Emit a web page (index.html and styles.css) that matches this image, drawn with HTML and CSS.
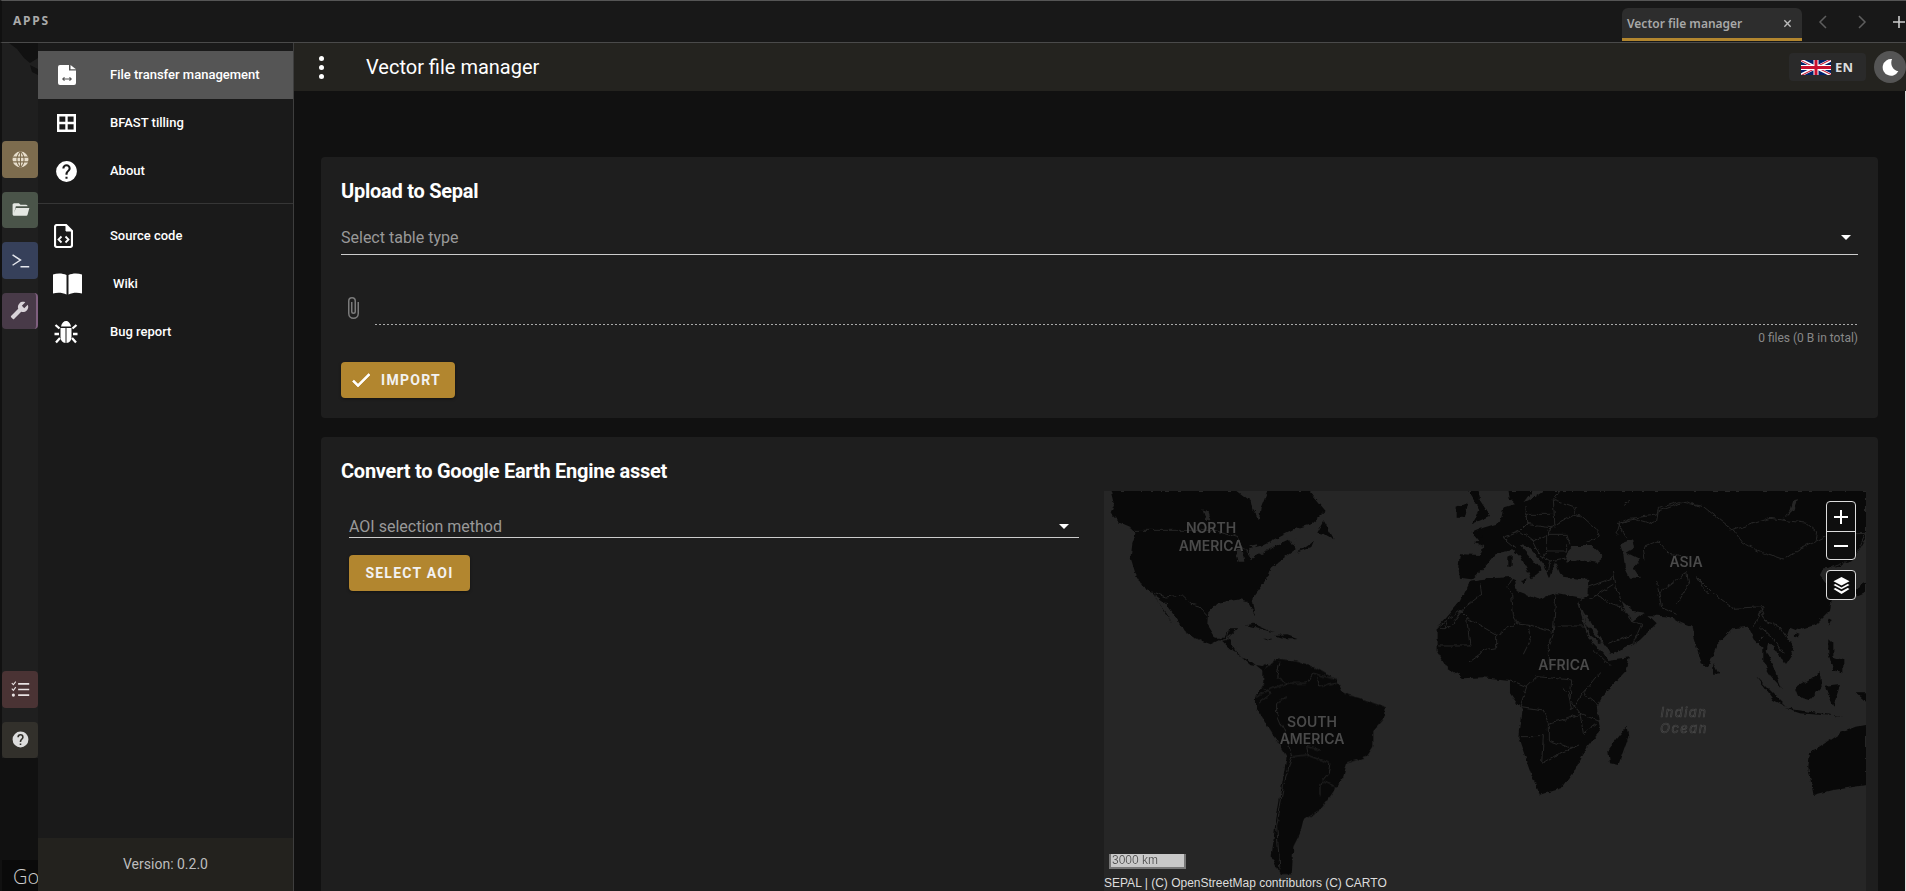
FILE: index.html
```html
<!DOCTYPE html>
<html lang="en">
<head>
    <meta charset="UTF-8">
    <meta name="viewport" content="width=device-width, initial-scale=1.0">
    <title>Vector file manager</title>
    <link rel="stylesheet" href="styles.css">
</head>
<body>
    <header class="topbar">
        <span class="apps-title">APPS</span>
        <div class="tab">
            <span class="tab-name">Vector file manager</span>
            <svg class="tab-close" viewBox="0 0 10 10"><path d="M1.5 1.5l7 7M8.5 1.5l-7 7"/></svg>
        </div>
        <svg class="tab-chevron" viewBox="0 0 12 16"><path d="M9 2L3 8l6 6"/></svg>
        <svg class="tab-chevron tab-chevron-next" viewBox="0 0 12 16"><path d="M3 2l6 6-6 6"/></svg>
        <svg class="tab-add" viewBox="0 0 12 12"><path d="M6 0v12M0 6h12"/></svg>
    </header>

    <div class="main">
        <aside class="rail">
            <svg class="rail-land" viewBox="0 0 38 60"><path d="M9 0l8 6 7 9 6 5 8-5V0zM30 22l8 4v6l-6-3z"/></svg>
            <div class="rail-group">
                <div class="rail-btn rail-globe">
                    <svg viewBox="0 0 24 24"><circle cx="12" cy="12" r="10" fill="#e6ddcb"/><path d="M12 2c-6 5-6 15 0 20M12 2c6 5 6 15 0 20M2 9h20M2 15h20M12 2v20" fill="none" stroke="#7d6c4e" stroke-width="1.3"/></svg>
                </div>
                <div class="rail-btn rail-folder">
                    <svg viewBox="0 0 24 24"><path d="M19 20H4c-1.100 0-2-.9-2-2V6c0-1.100.9-2 2-2h6l2 2h7a2 2 0 0 1 2 2H6.100L4 16l2.100-6h17.100l-2.300 8.500c-.2.9-1 1.500-1.900 1.500z" fill="#e4e7e2"/></svg>
                </div>
                <div class="rail-btn rail-terminal">
                    <svg viewBox="0 0 24 24"><path d="M2 5l10 6.500L2 18M12 20h11" fill="none" stroke="#e6e8ee" stroke-width="1.800"/></svg>
                </div>
                <div class="rail-btn rail-tools">
                    <svg viewBox="0 0 24 24"><g transform="matrix(-1 0 0 1 24 0)"><path d="M22.700 19l-9.100-9.100c.9-2.300.4-5-1.500-6.900-2-2-5-2.400-7.400-1.300L9 6 6 9 1.600 4.700C.4 7.100.9 10.100 2.900 12.100c1.900 1.900 4.600 2.400 6.900 1.500l9.100 9.100c.4.4 1 .4 1.400 0l2.300-2.300c.5-.4.5-1.100.1-1.400z" fill="#d9d3d9"/></g></svg>
                </div>
            </div>
            <div class="rail-group rail-group-bottom">
                <div class="rail-btn rail-tasks">
                    <svg viewBox="0 0 24 24"><path d="M1 4l2 2 3-4M1 11l2 2 3-4" fill="none" stroke="#e8e2e2" stroke-width="1.400"/><circle cx="3" cy="19" r="2" fill="#e8e2e2"/><path d="M9 5h14M9 12h14M9 19h14" stroke="#e8e2e2" stroke-width="2.200"/></svg>
                </div>
                <div class="rail-btn rail-help">
                    <svg viewBox="0 0 24 24"><path fill="#dcdcdc" d="M15.070 11.250l-.9.92C13.450 12.890 13 13.500 13 15h-2v-.5c0-1.110.45-2.110 1.170-2.830l1.240-1.260c.37-.36.59-.86.59-1.410 0-1.110-.9-2-2-2a2 2 0 0 0-2 2H8a4 4 0 0 1 4-4 4 4 0 0 1 4 4c0 .88-.36 1.670-.93 2.250M13 19h-2v-2h2M12 2A10 10 0 0 0 2 12a10 10 0 0 0 10 10 10 10 0 0 0 10-10c0-5.530-4.500-10-10-10z"/></svg>
                </div>
            </div>
            <div class="rail-google">Google</div>
        </aside>

        <nav class="drawer">
            <ul class="nav-list">
                <li class="nav-item nav-item-active">
                    <span class="nav-icon"><svg class="icon-file" viewBox="0 0 18 20"><path fill="#fff" d="M2 0h9v5.500h7V18a2 2 0 0 1-2 2H2a2 2 0 0 1-2-2V2a2 2 0 0 1 2-2z"/><path fill="#fff" d="M12.500 0L18 4.200h-5.500z"/><path d="M5 14h8M6.500 12.300L4.800 14l1.700 1.700M11.500 12.300l1.700 1.700-1.700 1.700" fill="none" stroke="#555" stroke-width="1.200"/></svg></span>
                    <span class="nav-text">File transfer management</span>
                </li>
                <li class="nav-item">
                    <span class="nav-icon"><svg class="icon-grid" viewBox="0 0 19 18"><path d="M1.200 1.200h16.600v15.600H1.200zM9.500 1v16M1 9h17" fill="none" stroke="#fff" stroke-width="2.400"/></svg></span>
                    <span class="nav-text">BFAST tilling</span>
                </li>
                <li class="nav-item">
                    <span class="nav-icon"><svg class="icon-help" viewBox="0 0 24 24"><path fill="#fff" d="M15.070 11.250l-.9.92C13.450 12.890 13 13.500 13 15h-2v-.5c0-1.110.45-2.110 1.170-2.830l1.240-1.260c.37-.36.59-.86.59-1.410 0-1.110-.9-2-2-2a2 2 0 0 0-2 2H8a4 4 0 0 1 4-4 4 4 0 0 1 4 4c0 .88-.36 1.670-.93 2.250M13 19h-2v-2h2M12 2A10 10 0 0 0 2 12a10 10 0 0 0 10 10 10 10 0 0 0 10-10c0-5.530-4.500-10-10-10z"/></svg></span>
                    <span class="nav-text">About</span>
                </li>
            </ul>
            <hr class="nav-divider">
            <ul class="nav-list nav-list-links">
                <li class="nav-item">
                    <span class="nav-icon"><svg class="icon-code" viewBox="0 0 19 24"><path d="M3 1h9l6 6v14a2 2 0 0 1-2 2H3a2 2 0 0 1-2-2V3a2 2 0 0 1 2-2z" fill="none" stroke="#fff" stroke-width="2.200"/><path d="M12 1v6h6" fill="#fff" stroke="#fff"/><path d="M7.500 12.500L4.500 15.500l3 3M11.500 12.500l3 3-3 3" fill="none" stroke="#fff" stroke-width="1.800"/></svg></span>
                    <span class="nav-text">Source code</span>
                </li>
                <li class="nav-item">
                    <span class="nav-icon"><svg class="icon-book" viewBox="0 0 29 22"><path fill="#fff" d="M0 1.500C4 0 9.500 0 13.500 2v19.500C9.500 19.500 4 19.500 0 20.500zM15.500 2c4-2 9.500-2 13.500-.5v19c-4-1-9.500-1-13.500 1z"/></svg></span>
                    <span class="nav-text nav-text-wiki">Wiki</span>
                </li>
                <li class="nav-item">
                    <span class="nav-icon"><svg class="icon-bug" viewBox="0 0 24 24"><path fill="#fff" d="M7 6.500C7.500 3 10 1 12 1s4.500 2 5 5.500zM6.500 8h5v15c-3-.3-5-2.300-5-6zM12.500 8h5v9c0 3.700-2 5.700-5 6z"/><path d="M5.500 8.500L1.500 5M18.500 8.500l4-3.500M5 14H.5M19 14h4.500M6 18l-4 4.500M18 18l4 4.500" fill="none" stroke="#fff" stroke-width="2.300"/></svg></span>
                    <span class="nav-text">Bug report</span>
                </li>
            </ul>
            <footer class="drawer-footer">Version: 0.2.0</footer>
        </nav>

        <div class="content">
            <div class="appbar">
                <div class="kebab"><i></i><i></i><i></i></div>
                <h1 class="app-title">Vector file manager</h1>
                <div class="lang-btn">
                    <svg class="flag" viewBox="0 0 60 30">
                        <clipPath id="flagClip"><path d="M30 15h30v15zM30 15v15H0zM30 15H0V0zM30 15V0h30z"/></clipPath>
                        <rect width="60" height="30" fill="#012169"/>
                        <path d="M0 0l60 30M60 0L0 30" stroke="#fff" stroke-width="6"/>
                        <path d="M0 0l60 30M60 0L0 30" clip-path="url(#flagClip)" stroke="#C8102E" stroke-width="4"/>
                        <path d="M30 0v30M0 15h60" stroke="#fff" stroke-width="10"/>
                        <path d="M30 0v30M0 15h60" stroke="#C8102E" stroke-width="6"/>
                    </svg>
                    <span class="lang-code">EN</span>
                </div>
                <div class="theme-btn">
                    <svg viewBox="0 0 24 24"><path fill="#fff" d="M14.500 2.500A10 10 0 1 0 22 17.200 10.500 10.500 0 0 1 14.500 2.500z"/></svg>
                </div>
            </div>

            <div class="page">
                <section class="card">
                    <h2 class="card-title">Upload to Sepal</h2>
                    <div class="select">
                        <span class="select-label">Select table type</span>
                        <span class="select-arrow"></span>
                    </div>
                    <div class="file-row">
                        <svg class="clip" viewBox="0 0 24 24"><path d="M16.500 6v11.500a4 4 0 0 1-4 4 4 4 0 0 1-4-4V5A2.500 2.500 0 0 1 11 2.500 2.500 2.500 0 0 1 13.500 5v10.500a1 1 0 0 1-1 1 1 1 0 0 1-1-1V6H10v9.500a2.500 2.500 0 0 0 2.500 2.500 2.500 2.500 0 0 0 2.500-2.500V5a4 4 0 0 0-4-4 4 4 0 0 0-4 4v12.500a5.500 5.500 0 0 0 5.500 5.500 5.500 5.500 0 0 0 5.500-5.500V6h-1.500z"/></svg>
                        <div class="file-input"></div>
                    </div>
                    <div class="file-count">0 files (0 B in total)</div>
                    <button class="btn btn-import">
                        <svg viewBox="0 0 24 24"><path fill="#fff" stroke="#fff" stroke-width=".7" d="M21 7L9 19l-5.500-5.500 1.410-1.410L9 16.170 19.590 5.590 21 7z"/></svg>
                        IMPORT
                    </button>
                </section>

                <section class="card card-map">
                    <h2 class="card-title">Convert to Google Earth Engine asset</h2>
                    <div class="columns">
                        <div class="aoi-col">
                            <div class="select select-aoi">
                                <span class="select-label">AOI selection method</span>
                                <span class="select-arrow"></span>
                            </div>
                            <button class="btn btn-aoi">SELECT AOI</button>
                        </div>
                        <div class="map">
                            <svg class="map-svg" viewBox="0 0 762 400">
                                <filter id="coast" x="-20" y="-20" width="802" height="440" filterUnits="userSpaceOnUse" color-interpolation-filters="sRGB">
                                    <feTurbulence type="fractalNoise" baseFrequency=".14" numOctaves="3" seed="4"/>
                                    <feDisplacementMap in="SourceGraphic" scale="5" xChannelSelector="R" yChannelSelector="G"/>
                                </filter>
                                <g filter="url(#coast)">
                                <!-- traced from crops, each group keeps its own crop coordinates -->
                                <g transform="scale(.3333)">
                                    <path class="land" d="M20 0L30 40 20 65 50 95 85 110 95 130 85 160 80 200 95 250 115 285 145 305 165 335 205 395 185 370 150 310 185 335 210 370 240 420 270 440 320 460 350 445 375 470 405 490 440 520 475 525 495 515 478 540 440 510 400 490 385 465 372 440 400 415 375 415 365 440 335 440 310 400 312 365 340 335 410 325 430 330 455 375 445 320 490 260 500 230 540 200 575 175 555 145 500 170 440 205 432 175 470 165 500 150 570 115 620 100 665 60 615 0H490L470 50 465 85 445 55 440 30 400 0z"/>
                                    <path class="land" d="M640 125L660 90 692 148 660 130zM578 185L630 148 622 168zM425 403L450 398 510 425 460 410zM510 432L550 430 582 442 540 442zM478 443L505 443 490 448z"/>
                                    <path class="water" d="M395 178L412 172 418 212 404 212zM295 55L310 60 320 90 305 85zM435 165L460 160 455 178z"/>
                                    <path class="border" d="M95 118H330L400 140 440 200 490 180 550 140 565 165 580 140M145 303L185 318 235 312 265 340 285 345 310 372M345 450L370 445 375 420M385 470L400 465 410 490M405 490L432 475"/>
                                </g>
                                <g transform="translate(-14 -11) scale(.3333)">
                                    <path class="land" d="M520 570L560 535 620 545 670 560 740 600 760 640 810 655 887 682 885 710 850 750 850 800 830 830 770 850 760 890 720 950 690 990 640 1020 630 1060 610 1100 605 1182H570L545 1130 555 1040 570 950 590 830 540 750 495 680 495 650 520 610z"/>
                                    <path class="border" d="M570 545L560 590 590 610 560 620 495 650M520 625L545 640 505 670M590 610L650 610 670 580 745 600M680 590L690 620 740 610M560 670L590 650M560 670L560 700 590 770 605 830M605 830L650 825 720 850 715 880 690 910 690 945M605 830L580 920 560 1040 570 1170M655 825L650 800 690 810M700 905L750 925"/>
                                </g>
                                <g transform="translate(296 0) scale(.3333)">
                                    <path class="land" d="M170 50L205 35 195 80 170 80zM240 20L235 0H205L238 55 225 85 215 100 270 75 235 20z"/>
                                </g>
                                <g transform="translate(396 -11) scale(.3333)">
                                    <path class="land" d="M-85 158L-50 143 0 128 10 83 45 73 30 58 25 33H1098V175L1060 240 1010 262 970 265 960 285 1000 335 990 390 945 435 895 450 870 440 860 470 885 510 855 555 830 510 805 490 800 510 835 600 845 625 815 590 790 550 790 500 770 490 745 440 700 445 650 495 625 560 605 550 580 470 575 440 545 430 510 410 445 405 470 430 420 480 330 522 320 500 270 465 235 365 262 350 265 300 190 290 180 280 165 245 150 295 130 250 85 200 60 195 125 270 95 295 60 230 40 210-10 220-25 235-55 273-85 298-120 293-125 263-120 223-60 225-50 200z"/>
                                    <path class="land" d="M-90 303L-60 298 30 291 45 298 50 333 115 358 165 338 245 353 232 370 265 475 310 520 325 540 390 532 380 570 305 650 290 680 300 750 260 800 225 870 185 925 120 945 95 885 55 770 65 690 30 640 30 600-50 592-110 595-160 560-190 510-190 443-120 363z"/>
                                    <path class="land" d="M380 740L385 770 355 855 330 850 325 810zM640 550L655 580 640 582zM768 588L860 680 820 660zM855 685L1030 710 900 700zM885 625L960 580 965 620 930 660 895 650zM975 620L1020 615 1000 680zM985 475L1000 490 1000 530 1030 540 1030 580 1000 570 985 520zM985 415L995 420 985 440zM1098 308L1060 330 1075 345 1098 335zM885 460L900 465 885 472zM1070 640L1098 640V665zM1098 735L1070 740 1020 760 930 820 925 860 940 945 1000 930 1098 915zM-75 190L-50 170-55 200zM25 230L35 225 35 260 25 260zM60 300L85 295 70 310z"/>
                                    <path class="water" d="M195 223L220 198 275 198 310 233 290 248 230 238 200 248zM360 193L400 178 405 203 380 218 420 238 400 263 420 293 390 293 375 263 370 223zM365 363L400 393 435 398 400 423 380 403zM235 373L270 423 320 503 325 528 300 483 260 433zM325 528L420 482 330 522zM100 33L130 33 90 60 70 70zM880 60L892 58 880 90 850 118 872 90z"/>
                                    <path class="border" d="M590 290L640 340 700 385 790 380 760 440M590 290L610 320 630 345M700 150L810 115 920 130 950 155 945 185 900 205 850 240 790 220 730 190 700 150M700 150L610 80 540 65 475 85 470 105 390 115 355 130 380 175M945 185L985 165 1098 160 1060 240M780 380L800 430 840 440 860 470M780 440L815 470 850 520M770 490L790 470M985 265L1040 245"/>
                                    <path class="border" d="M30 600L80 620 110 590 215 600 210 660 240 700 300 725M80 620L60 680 130 690 145 730 205 715 240 700M60 770H130L125 850 160 830 240 795M145 730L145 780 215 805M240 700L250 760 290 730M205 640L215 690 250 640 300 680M300 580L250 640M280 510L330 560M190 620L205 640"/>
                                </g>
                                <g transform="translate(296 0) scale(.3333)">
                                    <path class="border" d="M310 140L360 120 380 100 378 45M378 70L460 70M460 25L465 110M380 100L450 110M310 140L345 170M360 120L400 150 440 130M450 110L520 70 545 75 590 115 598 135 560 155M450 110L445 130 500 130 510 160M440 130L440 180 500 180 500 160M400 150L420 190 450 210 440 250M480 0L460 25 530 50 520 70M440 180L430 200M450 210L500 200"/>
                                    <path class="border" d="M650 130L660 95 700 85 750 100 770 90 775 60 860 30 900 50M670 45L690 30M730 170L775 150 810 190 860 200M735 205L730 170M640 240L650 300 665 330M770 270L785 350 830 370M770 310L860 245 868 280 830 340M580 310L640 340 665 345 690 385 725 400 700 455M625 460L700 430M560 290L640 260M570 325L640 280"/>
                                    <path class="border" d="M240 280L245 310 180 360 110 410M180 360L200 380 290 432 350 395 340 370 335 310 320 290 335 260M350 395L385 400 460 425 468 305M470 405H570M460 430L445 470 445 520M385 400L390 450 370 490M290 432L290 470 260 475 210 510M200 380L210 465 115 465M150 370L135 410M120 410H150L185 360"/>
                                </g>
                                </g>
                                <text class="map-label" x="107" y="42">NORTH</text>
                                <text class="map-label" x="107" y="60">AMERICA</text>
                                <text class="map-label" x="208" y="236">SOUTH</text>
                                <text class="map-label" x="208" y="253">AMERICA</text>
                                <text class="map-label" x="460" y="179">AFRICA</text>
                                <text class="map-label" x="582" y="76">ASIA</text>
                                <text class="map-ocean" x="580" y="226">Indian</text>
                                <text class="map-ocean" x="580" y="242">Ocean</text>
                            </svg>

                            <div class="map-zoom">
                                <div class="map-ctl">
                                    <svg viewBox="0 0 14 14"><path d="M7 0v14M0 7h14"/></svg>
                                </div>
                                <div class="map-ctl map-ctl-minus">
                                    <svg viewBox="0 0 14 14"><path d="M0 7h14"/></svg>
                                </div>
                            </div>
                            <div class="map-layers">
                                <svg viewBox="0 0 18 18"><path d="M9 0l8.500 4.500L9 9 .5 4.500zM2.500 7.500L9 11l6.500-3.500 2 1.100L9 13 .5 8.600zM2.500 11.600L9 15l6.500-3.400 2 1.100L9 18 .5 12.700z" fill="#fff"/></svg>
                            </div>
                            <div class="map-scale">3000 km</div>
                            <div class="map-attribution">SEPAL | (C) OpenStreetMap contributors (C) CARTO</div>
                        </div>
                    </div>
                </section>
            </div>
        </div>
    </div>
</body>
</html>
```

FILE: styles.css
```css
* {
    box-sizing: border-box;
}

html,
body {
    margin: 0;
    padding: 0;
    height: 891px;
    overflow: hidden;
}

body {
    font-family: Roboto, 'Noto Sans', sans-serif;
    background-color: #111;
    color: #fff;
}

h1,
h2,
ul {
    margin: 0;
    padding: 0;
}

svg {
    display: block;
}

/* top bar */
.topbar {
    display: flex;
    align-items: flex-start;
    height: 43px;
    background-color: #181818;
    border-top: 1px solid #555;
    border-bottom: 1px solid #4a4a4a;
    border-left: 2px solid #101010;
}

.apps-title {
    margin: 13px auto 0 11px;
    font-family: 'Noto Sans', sans-serif;
    font-size: 12px;
    font-weight: 700;
    letter-spacing: 1.8px;
    line-height: 14px;
    color: #aaa;
}

.tab {
    display: flex;
    align-items: center;
    justify-content: space-between;
    width: 180px;
    height: 33px;
    margin-top: 7px;
    padding: 0 10px 0 5px;
    background-color: #2d2d2d;
    border-bottom: 3px solid #b2862f;
    border-radius: 6px 6px 0 0;
}

.tab-name {
    font-family: 'Noto Sans', sans-serif;
    font-size: 12px;
    font-weight: 600;
    color: #a8a8a8;
}

.tab-close {
    width: 9px;
    height: 9px;
    fill: none;
    stroke: #bbb;
    stroke-width: 1.5;
}

.tab-chevron {
    width: 12px;
    height: 16px;
    margin: 13px 0 0 15px;
    fill: none;
    stroke: #5e5e5e;
    stroke-width: 1.5;
}

.tab-chevron-next {
    margin-left: 27px;
}

.tab-add {
    width: 12px;
    height: 12px;
    margin: 15px 1px 0 25px;
    fill: none;
    stroke: #ccc;
    stroke-width: 1.6;
}

/* main area */
.main {
    display: flex;
    height: 848px;
}

.rail {
    position: relative;
    display: flex;
    flex-direction: column;
    width: 38px;
    flex-shrink: 0;
    padding: 98px 0 133px;
    overflow: hidden;
    background-color: #1f1f1f;
    background-image: linear-gradient(#1f1f1f 0 715px, #111 715px 817px, #0a0a0a 817px);
    border-left: 2px solid #111;
}

.rail-land {
    position: absolute;
    top: 0;
    left: -2px;
    width: 38px;
    height: 60px;
    fill: #111;
}

.rail-group {
    display: flex;
    flex-direction: column;
    gap: 14px;
}

.rail-group-bottom {
    margin-top: auto;
}

.rail-btn {
    display: flex;
    align-items: center;
    justify-content: center;
    height: 36.5px;
    border-radius: 4px;
}

.rail-btn svg {
    width: 19px;
    height: 19px;
}

.rail-globe { background-color: #7d6c4e; }
.rail-folder { background-color: #4a5449; }
.rail-terminal { background-color: #36405a; }
.rail-tools { background-color: #483a48; border-right: 2px solid #7f5f7f; }
.rail-tasks { background-color: #4a3334; }
.rail-help { background-color: #32302b; }

.rail-google {
    position: absolute;
    left: 11px;
    bottom: 1px;
    font-family: 'Open Sans', sans-serif;
    font-size: 20px;
    font-weight: 300;
    color: #ccc;
}

/* navigation drawer */
.drawer {
    display: flex;
    flex-direction: column;
    width: 256px;
    flex-shrink: 0;
    padding-top: 8px;
    background-color: #1a1a1a;
    border-right: 1px solid #3e3e3e;
}

.nav-list {
    list-style: none;
}

.nav-list-links {
    flex: 1;
}

.nav-item {
    display: flex;
    align-items: center;
    height: 48px;
    padding-left: 16px;
}

.nav-item-active {
    background-color: #555;
}

.nav-icon {
    display: flex;
    align-items: center;
    justify-content: center;
    width: 24px;
    height: 24px;
    margin-right: 32px;
}

.nav-text {
    margin-bottom: 2px;
    font-size: 13px;
    font-weight: 500;
    color: #fff;
}

.nav-text-wiki {
    margin-left: 3px;
}

.icon-file { width: 18px; height: 20px; flex-shrink: 0; margin-left: 1px; }
.icon-grid { width: 19px; height: 18px; flex-shrink: 0; }
.icon-help { width: 25px; height: 25px; flex-shrink: 0; }
.icon-code { width: 19px; height: 24px; flex-shrink: 0; margin-left: -5px; }
.icon-book { width: 29px; height: 22px; flex-shrink: 0; margin-left: 3px; }
.icon-bug { width: 24px; height: 24px; flex-shrink: 0; }

.nav-divider {
    height: 1px;
    margin: 8px 0 8px;
    border: 0;
    background-color: #363636;
}

.drawer-footer {
    height: 53px;
    font-size: 14px;
    line-height: 53px;
    text-align: center;
    color: #bdbdbd;
    background-color: #23221e;
}

/* content */
.content {
    flex: 1;
    min-width: 0;
}

.appbar {
    display: flex;
    align-items: center;
    height: 48px;
    padding-left: 25px;
    background-color: #24231f;
}

.kebab {
    display: flex;
    flex-direction: column;
    gap: 4px;
    width: 6px;
}

.kebab i {
    display: block;
    width: 5px;
    height: 5px;
    border-radius: 50%;
    background-color: #fff;
}

.app-title {
    margin-left: 41px;
    font-size: 20px;
    font-weight: 400;
}

.lang-btn {
    display: flex;
    align-items: center;
    gap: 4px;
    width: 77px;
    height: 28px;
    margin-left: auto;
    padding-left: 12px;
    background-color: #2a2a2a;
    border-radius: 4px;
}

.flag {
    width: 30px;
    height: 15px;
}

.lang-code {
    font-family: 'Noto Sans', sans-serif;
    font-size: 13px;
    font-weight: 700;
    letter-spacing: .3px;
    color: #ddd;
}

.theme-btn {
    display: flex;
    align-items: center;
    justify-content: center;
    width: 32px;
    height: 32px;
    margin-left: 8px;
    border-radius: 50%;
    background-color: #555;
}

.theme-btn svg {
    width: 20px;
    height: 20px;
}

.page {
    height: 800px;
    padding: 66px 27px 0;
    overflow: hidden;
    border-right: 1px solid #ddd;
}

.card {
    padding: 18px 20px 20px;
    background-color: #1e1e1e;
    border-radius: 4px;
}

.card-map {
    margin-top: 19px;
    padding-right: 12px;
}

.card-title {
    font-size: 20px;
    font-weight: 700;
    line-height: 32px;
    letter-spacing: -.25px;
    color: #fff;
}

.select {
    display: flex;
    align-items: center;
    justify-content: space-between;
    height: 48px;
    padding: 19px 7px 5px 0;
    border-bottom: 1px solid #ccc;
}

.select-aoi {
    height: 47px;
    padding: 24px 10px 0 0;
}

.select-label {
    font-size: 16px;
    color: #999;
}

.select-arrow {
    width: 0;
    height: 0;
    border-left: 5px solid transparent;
    border-right: 5px solid transparent;
    border-top: 5px solid #fff;
}

.file-row {
    display: flex;
    gap: 10px;
    height: 29px;
    margin-top: 41px;
}

.clip {
    width: 24px;
    height: 24px;
    fill: #7b7b7b;
}

.file-input {
    flex: 1;
    align-self: flex-end;
    height: 1px;
    background-image: repeating-linear-gradient(90deg, #aaa 0 2px, transparent 2px 4px);
}

.file-count {
    margin-top: 6px;
    font-size: 12px;
    line-height: 14px;
    text-align: right;
    color: #888;
}

.btn {
    display: flex;
    align-items: center;
    justify-content: center;
    height: 36px;
    border: 0;
    border-radius: 4px;
    font-family: Roboto, sans-serif;
    font-size: 14px;
    font-weight: 700;
    letter-spacing: 1.25px;
    color: #f2f2f2;
    background-color: #b2862f;
    box-shadow: 0 1px 3px rgba(0, 0, 0, .4);
}

.btn-import {
    gap: 8px;
    width: 114px;
    margin-top: 17px;
}

.btn-import svg {
    width: 24px;
    height: 24px;
    margin-left: -6px;
}

.btn-aoi {
    width: 121px;
    margin-top: 17px;
}

.columns {
    display: flex;
    gap: 25px;
    margin-top: 4px;
}

.aoi-col {
    width: 730px;
    margin-left: 8px;
}

/* map */
.map {
    position: relative;
    width: 762px;
    height: 400px;
    flex-shrink: 0;
    background-color: #262626;
    overflow: hidden;
}

.map-svg {
    width: 762px;
    height: 400px;
}

.land {
    fill: #090909;
}

.water {
    fill: #262626;
}

.border {
    fill: none;
    stroke: #282828;
    stroke-width: 2.8;
}

.map-label {
    font-family: Inter, sans-serif;
    font-size: 14px;
    font-weight: 600;
    text-anchor: middle;
    fill: #4a4a4a;
}

.map-ocean {
    font-family: Inter, sans-serif;
    font-size: 13px;
    font-style: italic;
    letter-spacing: 1.5px;
    text-anchor: middle;
    fill: #262626;
    stroke: #484848;
    stroke-width: .7;
}

.map-zoom,
.map-layers {
    position: absolute;
    left: 722px;
    width: 30px;
    border: 1px solid #ddd;
    border-radius: 4px;
    background-color: #0e0e0e;
}

.map-zoom {
    top: 10px;
    height: 59px;
}

.map-layers {
    top: 79px;
    height: 30px;
    display: flex;
    align-items: center;
    justify-content: center;
}

.map-layers svg {
    width: 17px;
    height: 17px;
}

.map-ctl {
    display: flex;
    align-items: center;
    justify-content: center;
    height: 29px;
}

.map-ctl svg {
    width: 14px;
    height: 14px;
    fill: none;
    stroke: #fff;
    stroke-width: 2;
}

.map-ctl-minus {
    border-top: 1px solid #ddd;
    height: 28px;
}

.map-scale {
    position: absolute;
    left: 5px;
    bottom: 22px;
    width: 77px;
    height: 15px;
    padding-left: 1px;
    font-family: 'Liberation Sans', Arial, sans-serif;
    font-size: 12px;
    line-height: 12px;
    color: #555;
    background-color: #c8c8c8;
    border: 2px solid #777;
    border-top: 0;
    text-shadow: 0 0 1px #fff;
}

.map-attribution {
    position: absolute;
    left: 0;
    bottom: 0;
    height: 16px;
    font-family: 'Liberation Sans', Arial, sans-serif;
    font-size: 12px;
    line-height: 16px;
    color: #ddd;
    background-color: #262626;
}
```
